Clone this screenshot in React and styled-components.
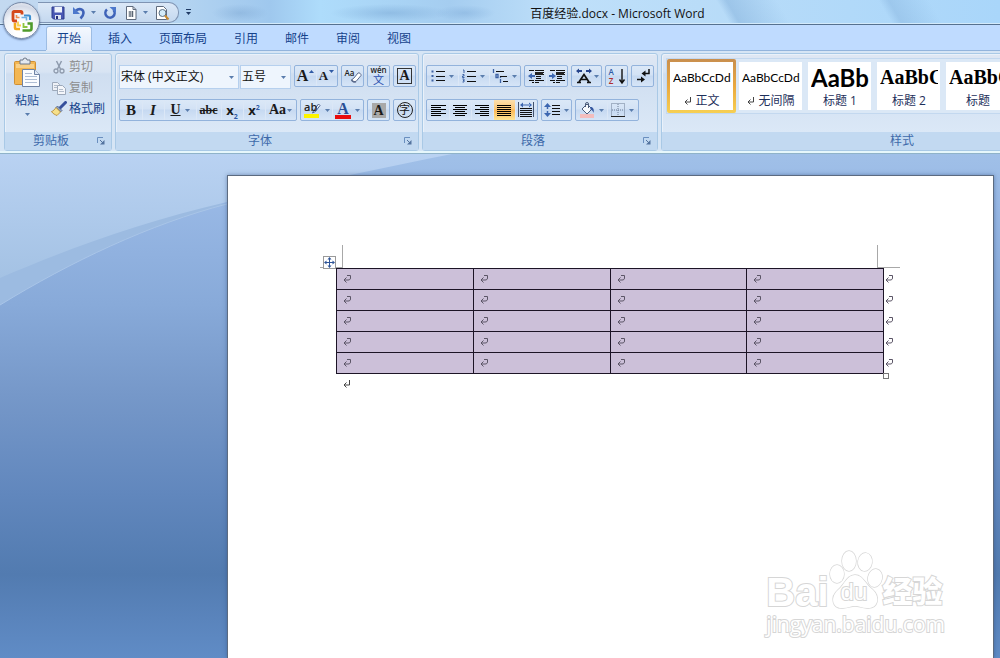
import React from "react";
import styled, { createGlobalStyle } from "styled-components";

const tabs = ["开始", "插入", "页面布局", "引用", "邮件", "审阅", "视图"];

const styleTiles = [
  { label: "正文", mark: true, kind: "body", sample: "AaBbCcDd", selected: true },
  { label: "无间隔", mark: true, kind: "body", sample: "AaBbCcDd" },
  { label: "标题 1", kind: "heading", sample: "AaBb" },
  { label: "标题 2", kind: "serif", sample: "AaBbC" },
  { label: "标题", kind: "serif", sample: "AaBbC" },
];

const rows = [1, 2, 3, 4, 5];
const cols = [1, 2, 3, 4];

const Icon = ({ size = 16, w, h, children, ...rest }) => (
  <svg width={w || size} height={h || size} viewBox={`0 0 ${w || size} ${h || size}`} fill="none" aria-hidden="true" {...rest}>
    {children}
  </svg>
);

const Arrow = () => (
  <Icon w={5} h={3}><path d="M0 0h5L2.500 3z" fill="#5a7dad" /></Icon>
);

const Lines = ({ rows: list, color = "#111" }) =>
  list.map(([x, y, w]) => <rect key={`${x}-${y}`} x={x} y={y} width={w} height="1" fill={color} shapeRendering="crispEdges" />);

const OfficeLogo = () => (
  <Icon size={24}>
    <path d="M12 5.500V3.500a1 1 0 0 0-1-1H4a1 1 0 0 0-1 1V11a1 1 0 0 0 1 1h3" stroke="#d4481b" strokeWidth="2.800" />
    <path d="M6.500 6v2.500h3" stroke="#f08a4b" strokeWidth="1.600" />
    <path d="M14 6.500h5a1 1 0 0 1 1 1V11" stroke="#3f8fd0" strokeWidth="2.200" />
    <path d="M11.500 8.500h5v3" stroke="#6fb0e4" strokeWidth="1.600" />
    <path d="M5 14v5a1 1 0 0 0 1 1h4" stroke="#f3a81b" strokeWidth="2.600" />
    <path d="M8 12.500v4h3" stroke="#f8cf4c" strokeWidth="1.800" />
    <path d="M12.500 21.500h7a2 2 0 0 0 2-2v-5h-4" stroke="#4f9a2b" strokeWidth="2.600" />
    <path d="M13.500 14v4h4" stroke="#8cc63f" strokeWidth="1.800" />
  </Icon>
);

const SaveIcon = () => (
  <Icon size={14}>
    <path d="M1 1h12v12H2.500L1 11.500z" fill="#4a58b4" stroke="#2d3a8c" />
    <path d="M3.500 1h7.500v5.500H3.500z" fill="#eef3fb" />
    <path d="M4 9h6v4H4z" fill="#dfe5f2" />
    <path d="M5 10h2v3H5z" fill="#26307a" />
  </Icon>
);

const UndoIcon = () => (
  <Icon size={14}>
    <path d="M4 4.500C7 2 11.500 3 11.500 7c0 2.500-1.500 4-3 5.500" stroke="#3f63b8" strokeWidth="2.600" />
    <path d="M1 1v7h7z" fill="#4d78cc" />
  </Icon>
);

const RedoIcon = () => (
  <Icon size={14}>
    <path d="M4 3.500a4.600 4.600 0 1 0 6.500.5" stroke="#3f63b8" strokeWidth="2.600" />
    <path d="M6.500 1h6.500v6z" fill="#4d78cc" />
  </Icon>
);

const DocIcon = () => (
  <Icon size={14}>
    <path d="M2.500.5h6.500l3 3v10h-9.500z" fill="#fff" stroke="#5f6b7d" />
    <path d="M9 .5v3h3" stroke="#5f6b7d" />
    <path d="M4.500 6h5M4.500 8h5M4.500 10h5M6 5v6M8.500 5v6" stroke="#44505f" strokeWidth=".8" />
  </Icon>
);

const PreviewIcon = () => (
  <Icon size={16}>
    <path d="M2.500 1.500h7l3 3v10h-10z" fill="#fff" stroke="#5f6b7d" />
    <circle cx="8.500" cy="8" r="3.500" fill="#d4ecfa" stroke="#5d7186" />
    <path d="M11 10.500l3.500 4" stroke="#c98a2e" strokeWidth="2" />
  </Icon>
);

const PasteIcon = () => (
  <Icon w={28} h={32}>
    <rect x="1.500" y="4.500" width="21" height="23" rx="1" fill="#f3b652" stroke="#cf8f33" />
    <path d="M3 7h18v4H3z" fill="#f9d088" />
    <path d="M7 3h3a2 2 0 0 1 4 0h3v4H7z" fill="#e3e8ef" stroke="#6c7787" />
    <path d="M9.500 12.500h12l5 5v12h-17z" fill="#fafcff" stroke="#6f83a5" />
    <path d="M21.500 12.500v5h5" stroke="#6f83a5" fill="#dde7f5" />
    <path d="M12 16.500h7M12 19.500h12M12 22.500h12M12 25.500h12" stroke="#aebdd4" />
  </Icon>
);

const CutIcon = () => (
  <Icon size={14}>
    <path d="M4.500 1l4 8M9.500 1l-4 8" stroke="#8f9bad" strokeWidth="1.500" />
    <circle cx="4" cy="11" r="2" stroke="#8f9bad" strokeWidth="1.300" />
    <circle cx="10" cy="11" r="2" stroke="#8f9bad" strokeWidth="1.300" />
  </Icon>
);

const CopyIcon = () => (
  <Icon size={14}>
    <path d="M.5 1.500h5l2 2v6h-7z" fill="#eef1f6" stroke="#9da9ba" />
    <path d="M5.500 4.500h5l3 3v6h-8z" fill="#f4f6fa" stroke="#9da9ba" />
    <path d="M7 8.500h4M7 10.500h5M2 4.500h3M2 6.500h3" stroke="#b3bdcb" />
  </Icon>
);

const BrushIcon = () => (
  <Icon size={16}>
    <path d="M14.500 1.500L9 7" stroke="#36509c" strokeWidth="3" strokeLinecap="round" />
    <path d="M6.500 5l4.500 4.500-1.500 1.500L5 6.500z" fill="#8fa3c7" stroke="#4a5d85" strokeWidth=".8" />
    <path d="M5 6.500L9.500 11 6 14.500C4 13.500 2 13 .5 10.500c2-.5 3-2 4.500-4z" fill="#f6e08a" stroke="#b1832b" strokeWidth=".8" />
  </Icon>
);

const LauncherIcon = () => (
  <Icon size={8}>
    <path d="M.5 6V.5H6" stroke="#6a8fbf" />
    <path d="M3 3l3 3" stroke="#54749f" />
    <path d="M7.500 3v4.500H3z" fill="#54749f" />
  </Icon>
);

const EraserIcon = () => (
  <Icon size={18}>
    <path d="M10 11l4-5c1-.8 3.500.8 3 2.500l-5 6c-1.500 1.500-5-.5-4-2z" fill="#fff" stroke="#5b6b8e" />
    <path d="M7.500 12.500c.5 2 2.500 2.800 4.500 2" stroke="#5b6b8e" strokeWidth="1.500" />
  </Icon>
);

const HighlightIcon = () => (
  <Icon size={18}>
    <path d="M15.500 3l-4.500 6-1.500 3 3-1.500 4.500-6z" fill="#f4f7fc" stroke="#506794" />
    <path d="M1 13h15v4H1z" fill="#fdf400" />
  </Icon>
);

const BulletsIcon = () => (
  <Icon size={14}>
    <path d="M.5 1.500h2v2h-2zM.5 6h2v2h-2zM.5 10.500h2v2h-2z" fill="#3d62a5" />
    <Lines rows={[[5, 2, 9], [5, 7, 9], [5, 11, 9]]} />
  </Icon>
);

const NumberingIcon = () => (
  <Icon size={14}>
    <path d="M1 1h1v3M.5 5.500H2v1.500H.500V8.500H2.500M.5 10H2v3H.5M1 11.500h1" stroke="#3d62a5" />
    <Lines rows={[[5, 2, 9], [5, 7, 9], [5, 12, 9]]} />
  </Icon>
);

const MultilevelIcon = () => (
  <Icon w={16} h={15}>
    <path d="M1.500 0v4M4 5.500h2v3H4zM8.500 10v4M8.500 8v1" stroke="#3d62a5" strokeWidth="1.300" />
    <Lines rows={[[4, 2, 8], [8, 7, 7], [11, 12, 5]]} />
  </Icon>
);

const IndentIcon = ({ left }) => (
  <Icon size={16}>
    <Lines rows={[[1, 2, 5], [7, 2, 9], [8, 4, 8], [8, 6, 8], [8, 8, 5], [8, 10, 5], [1, 12, 5], [7, 12, 9], [4, 14, 2], [7, 14, 4]]} />
    <rect x="7" y="4" width="8" height="3" fill="#222" />
    <path d={left ? "M0 8l4-3v2h3v2H4v2z" : "M7 8L3 5v2H0v2h3v2z"} fill="#3c66b0" />
  </Icon>
);

const AsianLayoutIcon = () => (
  <Icon w={18} h={16}>
    <path d="M2 14.500h4M12 14.500h4M4 14l5-7.500 5 7.500M6 11.500h6" stroke="#111" strokeWidth="1.700" />
    <path d="M1 3l3-2.500V2h3v2H4v1.500zM17 3l-3-2.500V2h-3v2h3v1.500z" fill="#25438c" />
  </Icon>
);

const SortIcon = () => (
  <Icon w={18} h={18}>
    <path d="M14 2v13M11.500 12.500L14 16l2.500-3.500" stroke="#111" strokeWidth="1.400" />
  </Icon>
);

const MarksIcon = () => (
  <Icon size={16}>
    <path d="M14 1v4.500H9" stroke="#111" strokeWidth="1.500" />
    <path d="M6.500 5.500l4-3v6zM10 11.500l-4-3v6z" fill="#111" />
    <path d="M2 11.500h5" stroke="#111" strokeWidth="1.500" />
  </Icon>
);

const alignRows = {
  left: [[0, 1, 15], [0, 3, 10], [0, 5, 15], [0, 7, 10], [0, 9, 15], [0, 11, 10]],
  center: [[0, 1, 14], [2, 3, 10], [0, 5, 14], [2, 7, 10], [0, 9, 14], [2, 11, 10]],
  right: [[0, 1, 14], [5, 3, 9], [0, 5, 14], [5, 7, 9], [0, 9, 14], [5, 11, 9]],
  justify: [[0, 1, 14], [0, 3, 14], [0, 5, 14], [0, 7, 14], [0, 9, 14], [0, 11, 14]],
};

const AlignIcon = ({ kind }) => (
  <Icon w={15} h={13}><Lines rows={alignRows[kind]} color="#000" /></Icon>
);

const DistributeIcon = () => (
  <Icon size={16}>
    <path d="M.5 0v15M15.500 0v15" stroke="#42516d" />
    <path d="M2 3l3-2.500v5zM14 3l-3-2.500v5zM4 2.500h8v1H4z" fill="#3c66b0" />
    <Lines rows={[[2, 6, 12], [2, 8, 12], [2, 10, 12], [2, 12, 12], [2, 14, 12]]} />
  </Icon>
);

const SpacingIcon = () => (
  <Icon size={16}>
    <path d="M3.500 4v3M3.500 9v3" stroke="#3c66b0" strokeWidth="1.500" />
    <path d="M0 5l3.500-4L7 5zM0 11l3.500 4L7 11z" fill="#3c66b0" />
    <Lines rows={[[8, 3, 8], [8, 6, 8], [8, 9, 8], [8, 12, 8]]} />
  </Icon>
);

const BucketIcon = () => (
  <Icon size={16}>
    <path d="M1 12h14v4H1z" fill="#f3bdbd" />
    <path d="M3 7l5-5 5 5-5 5z" fill="#f6f9fd" stroke="#4c5c7a" />
    <path d="M6.500 5V2a1.500 1.500 0 0 1 3 0v4" stroke="#4c5c7a" />
    <path d="M11 5c3-.5 4.500 2 3.500 6-.5-2-1.500-3-3-3.500z" fill="#3558a0" />
  </Icon>
);

const BordersIcon = () => (
  <Icon size={14}>
    <path d="M.5.5h13v13H.500zM7 1v12M1 7h12" stroke="#6c7c94" strokeDasharray="1 1" />
    <path d="M0 13.500h14" stroke="#222" />
  </Icon>
);

const CellMark = () => (
  <Icon size={8}>
    <path d="M4 .5h3.500v2.500c0 1.500-1 2-2.500 2H1M3.500 2.500L1 5l2.500 2.500" stroke="#5b5566" />
  </Icon>
);

const ParagraphMark = () => (
  <Icon size={8}>
    <path d="M6.500 0v5H1M3.500 2.500L1 5l2.500 2.500" stroke="#444" />
  </Icon>
);

const MoveIcon = () => (
  <Icon size={11}>
    <path d="M5.500 2v7M2 5.500h7" stroke="#2f5597" />
    <path d="M5.500 0L7.500 2.500h-4zM5.500 11l2-2.500h-4zM0 5.500l2.500-2v4zM11 5.500l-2.500-2v4z" fill="#2f5597" />
  </Icon>
);

const Paw = () => (
  <Icon w={54} h={60}>
    <g fill="#fff" stroke="#d6d6d6" strokeWidth="1.400">
      <ellipse cx="8" cy="24" rx="7" ry="9" />
      <ellipse cx="20" cy="11" rx="7" ry="10" />
      <ellipse cx="36" cy="12" rx="7" ry="9" transform="rotate(8 36 12)" />
      <ellipse cx="46" cy="28" rx="7" ry="9" transform="rotate(12 46 28)" />
      <path d="M26 25c8 0 10 9 17 14 9 8 6 20-5 19-5 0-8-2-12-2s-7 2-12 2C3 59 1 47 9 40c7-6 9-15 17-15z" />
    </g>
  </Icon>
);

const App = () => (
  <Window>
    <GlobalStyle />
    <TitleBar>
      <OfficeButton aria-label="Office"><OfficeLogo /></OfficeButton>
      <QuickAccess>
        <QuickButton aria-label="保存"><SaveIcon /></QuickButton>
        <QuickButton aria-label="撤消" $split><UndoIcon /><Arrow /></QuickButton>
        <QuickButton aria-label="恢复"><RedoIcon /></QuickButton>
        <QuickButton aria-label="文档" $split><DocIcon /><Arrow /></QuickButton>
        <QuickButton aria-label="打印预览"><PreviewIcon /></QuickButton>
      </QuickAccess>
      <QuickButton aria-label="自定义快速访问工具栏">
        <Icon w={7} h={7}><path d="M1 .5h5" stroke="#1f3a64" /><path d="M1 3h5L3.500 6z" fill="#1f3a64" /></Icon>
      </QuickButton>
      <Title>百度经验.docx - Microsoft Word</Title>
    </TitleBar>

    <TabRow>
      {tabs.map((tab, i) => <Tab key={tab} $active={i === 0}>{tab}</Tab>)}
    </TabRow>

    <Ribbon>
      <Group $width={108}>
        <ClipboardBody>
          <PasteButton><PasteIcon /><span>粘贴</span><Arrow /></PasteButton>
          <ClipboardList>
            <ClipButton disabled><ClipIcon><CutIcon /></ClipIcon>剪切</ClipButton>
            <ClipButton disabled><ClipIcon><CopyIcon /></ClipIcon>复制</ClipButton>
            <ClipButton><ClipIcon><BrushIcon /></ClipIcon>格式刷</ClipButton>
          </ClipboardList>
        </ClipboardBody>
        <Caption name="剪贴板" />
      </Group>

      <Group $width={304}>
        <GroupBody>
          <ToolRow>
            <Combos>
              <Combo $width={120}>
                <select aria-label="字体"><option>宋体 (中文正文)</option></select>
                <Arrow />
              </Combo>
              <Combo $width={51}>
                <select aria-label="字号"><option>五号</option></select>
                <Arrow />
              </Combo>
            </Combos>
            <ButtonSet>
              <Tool aria-label="增大字体"><Serif $size={16}>A</Serif><Icon w={5} h={12}><path d="M0 3h5L2.500 0z" fill="#2f5aa5" /></Icon></Tool>
              <Tool aria-label="缩小字体"><Serif $size={13}>A</Serif><Icon w={5} h={12}><path d="M0 0h5L2.500 3z" fill="#2f5aa5" /></Icon></Tool>
            </ButtonSet>
            <ButtonSet><Tool aria-label="清除格式"><Stack><EraserIcon /><Tiny>Aa</Tiny></Stack></Tool></ButtonSet>
            <ButtonSet><Tool aria-label="拼音指南"><Pinyin><b>wén</b><i>文</i></Pinyin></Tool></ButtonSet>
            <ButtonSet><Tool aria-label="字符边框"><Framed>A</Framed></Tool></ButtonSet>
          </ToolRow>
          <ToolRow>
            <ButtonSet>
              <Tool $width={22} aria-label="加粗"><Serif $size={15}>B</Serif></Tool>
              <Tool $width={22} aria-label="倾斜"><Serif $size={15} $italic>I</Serif></Tool>
              <Tool $width={32} $split aria-label="下划线"><Serif $size={14} $line="underline">U</Serif><Arrow /></Tool>
              <Tool $width={25} aria-label="删除线"><Serif $size={12} $line="line-through">abc</Serif></Tool>
              <Tool $width={22} aria-label="下标"><Script>x<sub>2</sub></Script></Tool>
              <Tool $width={22} aria-label="上标"><Script>x<sup>2</sup></Script></Tool>
              <Tool $width={31} aria-label="更改大小写"><Serif $size={14}>Aa</Serif><Arrow /></Tool>
            </ButtonSet>
            <ButtonSet>
              <Tool $width={31} $split aria-label="突出显示"><Stack><HighlightIcon /><Tiny $big>ab</Tiny></Stack><Arrow /></Tool>
              <Tool $width={31} $split aria-label="字体颜色"><ColorA>A</ColorA><Arrow /></Tool>
            </ButtonSet>
            <ButtonSet><Tool aria-label="字符底纹"><Shaded>A</Shaded></Tool></ButtonSet>
            <ButtonSet><Tool aria-label="带圈字符"><Circled>字</Circled></Tool></ButtonSet>
          </ToolRow>
        </GroupBody>
        <Caption name="字体" />
      </Group>

      <Group $width={236}>
        <GroupBody>
          <ToolRow>
            <ButtonSet>
              <Tool $width={31} $split aria-label="项目符号"><BulletsIcon /><Arrow /></Tool>
              <Tool $width={31} $split aria-label="编号"><NumberingIcon /><Arrow /></Tool>
              <Tool $width={31} $split aria-label="多级列表"><MultilevelIcon /><Arrow /></Tool>
            </ButtonSet>
            <ButtonSet>
              <Tool aria-label="减少缩进量"><IndentIcon left /></Tool>
              <Tool aria-label="增加缩进量"><IndentIcon /></Tool>
            </ButtonSet>
            <ButtonSet><Tool $width={29} aria-label="中文版式"><AsianLayoutIcon /><Arrow /></Tool></ButtonSet>
            <ButtonSet><Tool aria-label="排序"><Stack><SortIcon /><SortText><span>A</span><span>Z</span></SortText></Stack></Tool></ButtonSet>
            <ButtonSet><Tool aria-label="显示编辑标记"><MarksIcon /></Tool></ButtonSet>
          </ToolRow>
          <ToolRow>
            <ButtonSet>
              <Tool $width={22} aria-label="左对齐"><AlignIcon kind="left" /></Tool>
              <Tool $width={22} aria-label="居中"><AlignIcon kind="center" /></Tool>
              <Tool $width={22} aria-label="右对齐"><AlignIcon kind="right" /></Tool>
              <Tool $width={22} $on aria-label="两端对齐"><AlignIcon kind="justify" /></Tool>
              <Tool $width={22} aria-label="分散对齐"><DistributeIcon /></Tool>
            </ButtonSet>
            <ButtonSet><Tool $width={29} $split aria-label="行距"><SpacingIcon /><Arrow /></Tool></ButtonSet>
            <ButtonSet>
              <Tool $width={31} $split aria-label="底纹"><BucketIcon /><Arrow /></Tool>
              <Tool $width={31} $split aria-label="边框"><BordersIcon /><Arrow /></Tool>
            </ButtonSet>
          </ToolRow>
        </GroupBody>
        <Caption name="段落" />
      </Group>

      <Group $width={496} $grow>
        <GalleryBody>
          <Gallery>
            {styleTiles.map((tile) => (
              <Tile key={tile.label} $selected={tile.selected}>
                <TilePaper>
                  <Sample $kind={tile.kind}>{tile.sample}</Sample>
                  <TileName>{tile.mark && <ParagraphMark />}{tile.label}</TileName>
                </TilePaper>
              </Tile>
            ))}
          </Gallery>
        </GalleryBody>
        <Caption name="样式" />
      </Group>
    </Ribbon>

    <Workspace>
      <Swoosh viewBox="0 0 1000 504" preserveAspectRatio="none" aria-hidden="true">
        <defs>
          <linearGradient id="sky" x1="0" y1="0" x2="0" y2="1">
            <stop offset="0" stopColor="#b9d2f2" />
            <stop offset="1" stopColor="#a4c2e4" />
          </linearGradient>
        </defs>
        <path d="M0 151C70 108 150 70 227 50L0 40z" fill="#9cbbe1" />
        <path d="M0 151C70 108 150 70 227 50" fill="none" stroke="#a9c5e8" />
        <path d="M0 0H452C380 14 310 30 227 48 140 68 60 98 0 124z" fill="url(#sky)" />
      </Swoosh>
      <Page>
        <Frame>
          <MarginMarks><Corner $side="right" /><Corner $side="left" /></MarginMarks>
          <MoveHandle aria-label="移动表格"><MoveIcon /></MoveHandle>
          <TableWrap>
            <Table>
              <tbody>
                {rows.map((r) => (
                  <tr key={r}>
                    {cols.map((c) => <Cell key={c}><CellMark /></Cell>)}
                    <RowEnd><CellMark /></RowEnd>
                  </tr>
                ))}
              </tbody>
            </Table>
            <ResizeHandle />
          </TableWrap>
          <AfterTable><ParagraphMark /></AfterTable>
        </Frame>
        <Watermark>
          <Brand>
            <Outline $size={40}>Bai</Outline>
            <PawBox><Paw /><Outline $size={24} $inPaw>du</Outline></PawBox>
            <Outline $size={30} $heavy>经验</Outline>
          </Brand>
          <Site>jingyan.baidu.com</Site>
        </Watermark>
      </Page>
    </Workspace>
  </Window>
);

export default App;

const Caption = ({ name }) => (
  <CaptionBar>
    <span>{name}</span>
    <Launcher aria-label={`${name}选项`}><LauncherIcon /></Launcher>
  </CaptionBar>
);

const GlobalStyle = createGlobalStyle`
  * {
    box-sizing: border-box;
  }
  body {
    margin: 0;
    overflow: hidden;
    font-family: "Open Sans", "Noto Sans CJK SC", sans-serif;
    font-size: 12px;
    line-height: 16px;
  }
  button, select {
    font: inherit;
    color: inherit;
    border: 0;
    padding: 0;
    background: none;
  }
  svg {
    display: block;
    flex: none;
  }
`

const Window = styled.div`
  display: flex;
  flex-direction: column;
  min-height: 100vh;
  background: #bfdbff;
`

const TitleBar = styled.header`
  position: relative;
  display: flex;
  align-items: center;
  height: 25px;
  padding: 1px 0 0 38px;
  border-bottom: 1px solid #56718f;
  box-shadow: inset 0 -1px 0 #d3eafb;
  background:
    radial-gradient(ellipse 28px 9px at 240px 13px, rgba(90, 135, 185, 0.25), transparent),
    radial-gradient(ellipse 60px 9px at 390px 13px, rgba(80, 130, 185, 0.28), transparent),
    radial-gradient(ellipse 30px 8px at 465px 13px, rgba(90, 140, 195, 0.25), transparent),
    linear-gradient(60deg, transparent 72%, rgba(130, 175, 218, 0.5) 73%, transparent 78%, transparent 88%, rgba(130, 175, 218, 0.4) 89%, transparent 93%),
    linear-gradient(to right, #c3d9f0 0, #b4d4f1 180px, #9fc8ee 270px, #aedcfb 320px, #a5cdf0 450px, #bfe0fa 560px, #b9dcf8 700px, #a9d6fa 100%);
`

const OfficeButton = styled.button`
  position: absolute;
  z-index: 2;
  left: 3px;
  top: 2px;
  display: flex;
  align-items: center;
  justify-content: center;
  width: 37px;
  height: 37px;
  border-radius: 50%;
  border: 1px solid #7688a6;
  background: radial-gradient(circle at 50% 80%, #ffffff 20%, #eef1f7 55%, #d3d9e6 75%, #f4f7fb 100%);
  box-shadow: 0 1px 2px rgba(40, 60, 100, 0.6);
`

const QuickAccess = styled.div`
  display: flex;
  align-items: center;
  gap: 2px;
  width: 141px;
  height: 21px;
  padding-left: 11px;
  border: 1px solid #7f94b3;
  border-left: 0;
  border-radius: 0 10px 10px 0;
  background: linear-gradient(#dbe8f7, #c4d8ef);
`

const QuickButton = styled.button`
  display: flex;
  align-items: center;
  justify-content: center;
  gap: 5px;
  width: ${(props) => (props.$split ? "30px" : "18px")};
  height: 18px;
`

const Title = styled.h1`
  flex: 1;
  margin: 0;
  padding: 2px 0 0 38px;
  text-align: center;
  font-size: 12px;
  font-weight: 400;
  color: #111;
`

const TabRow = styled.nav`
  display: flex;
  align-items: flex-end;
  gap: 5px;
  height: 26px;
  padding-left: 46px;
  border-bottom: 1px solid #93b4dc;
  background: #bfdbff;
`

const Tab = styled.button`
  height: 24px;
  padding: 2px 11px 0;
  color: #15428b;
  ${(props) => props.$active && `
    border: 1px solid #9dbde4;
    border-bottom: 0;
    padding: 1px 10px 0;
    border-radius: 3px 3px 0 0;
    background: linear-gradient(#f4f8fe, #dfeafa);
    box-shadow: 0 1px 0 #dfe9f6;
  `}
`

const Ribbon = styled.div`
  display: flex;
  gap: 3px;
  height: 103px;
  padding: 2px 0 0 4px;
  overflow: hidden;
  border-bottom: 1px solid #8fb3c9;
  box-shadow: inset 0 -2px 0 #e6f7fb;
  background: #d6e5f5;
`

const Group = styled.section`
  display: flex;
  flex-direction: column;
  flex: ${(props) => (props.$grow ? 1 : 0)} 0 ${(props) => props.$width}px;
  height: 98px;
  border: 1px solid #a9c9e6;
  border-radius: 3px;
  box-shadow: inset 1px 1px 0 #e9f1fa;
  background: linear-gradient(#dfe7f3 0, #d8e4f3 18px, #cfdef0 20px, #dbe8f7 78px);
`

const CaptionBar = styled.div`
  display: flex;
  align-items: center;
  height: 18px;
  padding-right: 2px;
  color: #3e6aaa;
  background: #c2d9f1;
  span {
    flex: 1;
    text-align: center;
  }
`

const Launcher = styled.button`
  width: 12px;
  height: 14px;
`

const GroupBody = styled.div`
  display: flex;
  flex-direction: column;
  flex: 1;
  gap: 10px;
  padding: 11px 0 0 3px;
`

const ToolRow = styled.div`
  display: flex;
  align-items: flex-start;
  gap: 3px;
  height: 24px;
`

const Combos = styled.div`
  display: flex;
  gap: 1px;
`

const Combo = styled.div`
  position: relative;
  width: ${(props) => props.$width}px;
  select {
    appearance: none;
    width: 100%;
    height: 24px;
    padding-left: 1px;
    border: 1px solid #b6d0ee;
    border-radius: 0;
    background: #eef5fd;
    color: #111;
  }
  svg {
    position: absolute;
    right: 5px;
    top: 11px;
    pointer-events: none;
  }
`

const ButtonSet = styled.div`
  display: flex;
  height: 22px;
  border: 1px solid #93b3dc;
  border-radius: 2px;
  background: linear-gradient(#dbe8f7 0, #d3e2f5 9px, #c6d9f1 10px, #d6e5f7 100%);
`

const Tool = styled.button`
  display: flex;
  align-items: center;
  justify-content: center;
  gap: ${(props) => (props.$split ? 4 : 1)}px;
  width: ${(props) => props.$width || 21}px;
  height: 20px;
  & + & {
    box-shadow: inset 1px 0 0 #dbe7f6;
  }
  ${(props) => props.$on && `
    background: linear-gradient(#fbdfae 0, #fcc878 45%, #fbb653 50%, #fee596 100%);
  `}
`

const Serif = styled.span`
  font-family: "Liberation Serif", serif;
  font-weight: 700;
  font-size: ${(props) => props.$size}px;
  font-style: ${(props) => (props.$italic ? "italic" : "normal")};
  text-decoration: ${(props) => props.$line || "none"};
  color: #1a1a1a;
`

const Script = styled.span`
  font-family: "Open Sans", sans-serif;
  font-weight: 700;
  font-size: 13px;
  color: #1a1a1a;
  sub, sup {
    font-size: 7px;
    line-height: 0;
    color: #2f5aa5;
  }
`

const Stack = styled.span`
  position: relative;
  display: block;
`

const Tiny = styled.span`
  position: absolute;
  left: 1px;
  top: 0;
  font-size: ${(props) => (props.$big ? 11 : 8)}px;
  font-weight: 600;
  line-height: 12px;
  color: #222;
`

const Pinyin = styled.span`
  display: flex;
  flex-direction: column;
  align-items: center;
  b {
    font-size: 8px;
    font-weight: 600;
    line-height: 8px;
    color: #222;
  }
  i {
    font-size: 11px;
    font-style: normal;
    line-height: 12px;
    color: #2b4fae;
  }
`

const Framed = styled(Serif)`
  width: 15px;
  border: 1px solid #333;
  font-size: 14px;
  line-height: 14px;
`

const Shaded = styled(Serif)`
  width: 14px;
  font-size: 14px;
  line-height: 15px;
  background: #a9a9a9;
`

const ColorA = styled(Serif)`
  width: 16px;
  border-bottom: 4px solid #e80c0c;
  font-size: 16px;
  line-height: 13px;
  color: #2b4f96;
`

const Circled = styled.span`
  width: 16px;
  height: 16px;
  border: 1px solid #222;
  border-radius: 50%;
  font-size: 11px;
  line-height: 13px;
  color: #111;
`

const SortText = styled.span`
  position: absolute;
  left: 1px;
  top: 0;
  display: flex;
  flex-direction: column;
  font-size: 8px;
  font-weight: 600;
  line-height: 9px;
  color: #2f5aa5;
  span + span {
    color: #b03030;
  }
`

const ClipboardBody = styled.div`
  display: flex;
  flex: 1;
  gap: 5px;
  padding: 2px 0 0 3px;
`

const PasteButton = styled.button`
  display: flex;
  flex-direction: column;
  align-items: center;
  gap: 4px;
  width: 38px;
  padding-top: 1px;
  color: #15428b;
`

const ClipboardList = styled.div`
  display: flex;
  flex-direction: column;
`

const ClipButton = styled.button`
  display: flex;
  align-items: center;
  gap: 2px;
  height: 21px;
  color: ${(props) => (props.disabled ? "#8d8d8d" : "#15428b")};
`

const ClipIcon = styled.span`
  display: flex;
  justify-content: center;
  width: 16px;
`

const GalleryBody = styled.div`
  flex: 1;
  padding: 4px 0 0 4px;
`

const Gallery = styled.div`
  display: flex;
  height: 56px;
  border: 1px solid #c3d8ef;
  background: #dbe8f6;
`

const Tile = styled.button`
  display: flex;
  flex: none;
  width: 69px;
  height: 54px;
  padding: 3px;
  border-radius: 2px;
  ${(props) => props.$selected && `
    background: linear-gradient(#c98f4e, #e9a83f 50%, #f7cf53);
  `}
`

const TilePaper = styled.span`
  display: flex;
  flex: 1;
  flex-direction: column;
  min-width: 0;
  height: 48px;
  padding: 0 2px 0 3px;
  background: #fff;
`

const sampleFonts = {
  body: `font-size: 12px; font-family: Lato, sans-serif;`,
  heading: `font-size: 24px; font-weight: 700; font-family: Lato, sans-serif;`,
  serif: `font-size: 20px; font-weight: 700; font-family: "Liberation Serif", serif;`,
};

const Sample = styled.span`
  display: block;
  height: 31px;
  overflow: hidden;
  text-align: left;
  white-space: nowrap;
  line-height: 31px;
  color: #000;
  ${(props) => sampleFonts[props.$kind]}
`

const TileName = styled.span`
  display: flex;
  align-items: center;
  justify-content: center;
  gap: 3px;
  color: #1d2f5a;
`

const Workspace = styled.main`
  position: relative;
  display: flex;
  flex: 1;
  padding: 21px 6px 0 227px;
  background: linear-gradient(#a0c0e8 0, #98b8e5 50px, #88aad9 150px, #7698c9 240px, #6187bd 340px, #527bb0 420px, #5a84bc 465px, #608cc6 504px);
`

const Swoosh = styled.svg`
  position: absolute;
  left: 0;
  top: 0;
  width: 100%;
  height: 504px;
`

const Page = styled.article`
  position: relative;
  flex: 1;
  padding: 69px 93px 0 92px;
  border: 1px solid #5c6b80;
  border-bottom: 0;
  background: #fff;
  box-shadow: 0 0 4px rgba(40, 70, 120, 0.5);
`

const Frame = styled.div`
  position: relative;
`

const MarginMarks = styled.div`
  display: flex;
  justify-content: space-between;
`

const Corner = styled.span`
  width: 23px;
  height: 23px;
  border-bottom: 1px solid #a8a8a8;
  border-${(props) => props.$side}: 1px solid #a8a8a8;
`

const MoveHandle = styled.button`
  position: absolute;
  left: 3px;
  top: 11px;
  display: flex;
  padding: 0;
  border: 1px solid #9a9a9a;
  background: #fff;
`

const TableWrap = styled.div`
  position: relative;
  padding-left: 16px;
`

const Table = styled.table`
  width: 100%;
  table-layout: fixed;
  border-collapse: collapse;
`

const Cell = styled.td`
  height: 21px;
  padding: 0 0 0 6px;
  border: 1px solid #1c1426;
  background: #ccc0d9;
`

const RowEnd = styled.td`
  width: 16px;
  padding: 0 0 0 1px;
`

const ResizeHandle = styled.span`
  position: absolute;
  right: 11px;
  bottom: -5px;
  width: 6px;
  height: 6px;
  border: 1px solid #777;
  background: #fff;
`

const AfterTable = styled.p`
  margin: 0;
  padding: 6px 0 0 23px;
`

const Watermark = styled.div`
  position: absolute;
  right: 48px;
  bottom: 20px;
  display: flex;
  flex-direction: column;
  color: #fff;
  -webkit-text-stroke: 2px #d6d6d6;
  paint-order: stroke fill;
`

const Brand = styled.div`
  display: flex;
  align-items: flex-end;
`

const Outline = styled.span`
  font-family: "Liberation Sans", "Noto Sans CJK SC", sans-serif;
  font-weight: ${(props) => (props.$heavy ? 900 : 700)};
  font-size: ${(props) => props.$size}px;
  line-height: 36px;
  ${(props) => props.$inPaw && `
    position: absolute;
    left: 12px;
    bottom: 0;
    font-weight: 400;
  `}
`

const PawBox = styled.span`
  position: relative;
`

const Site = styled.span`
  font-size: 21px;
  line-height: 28px;
`
